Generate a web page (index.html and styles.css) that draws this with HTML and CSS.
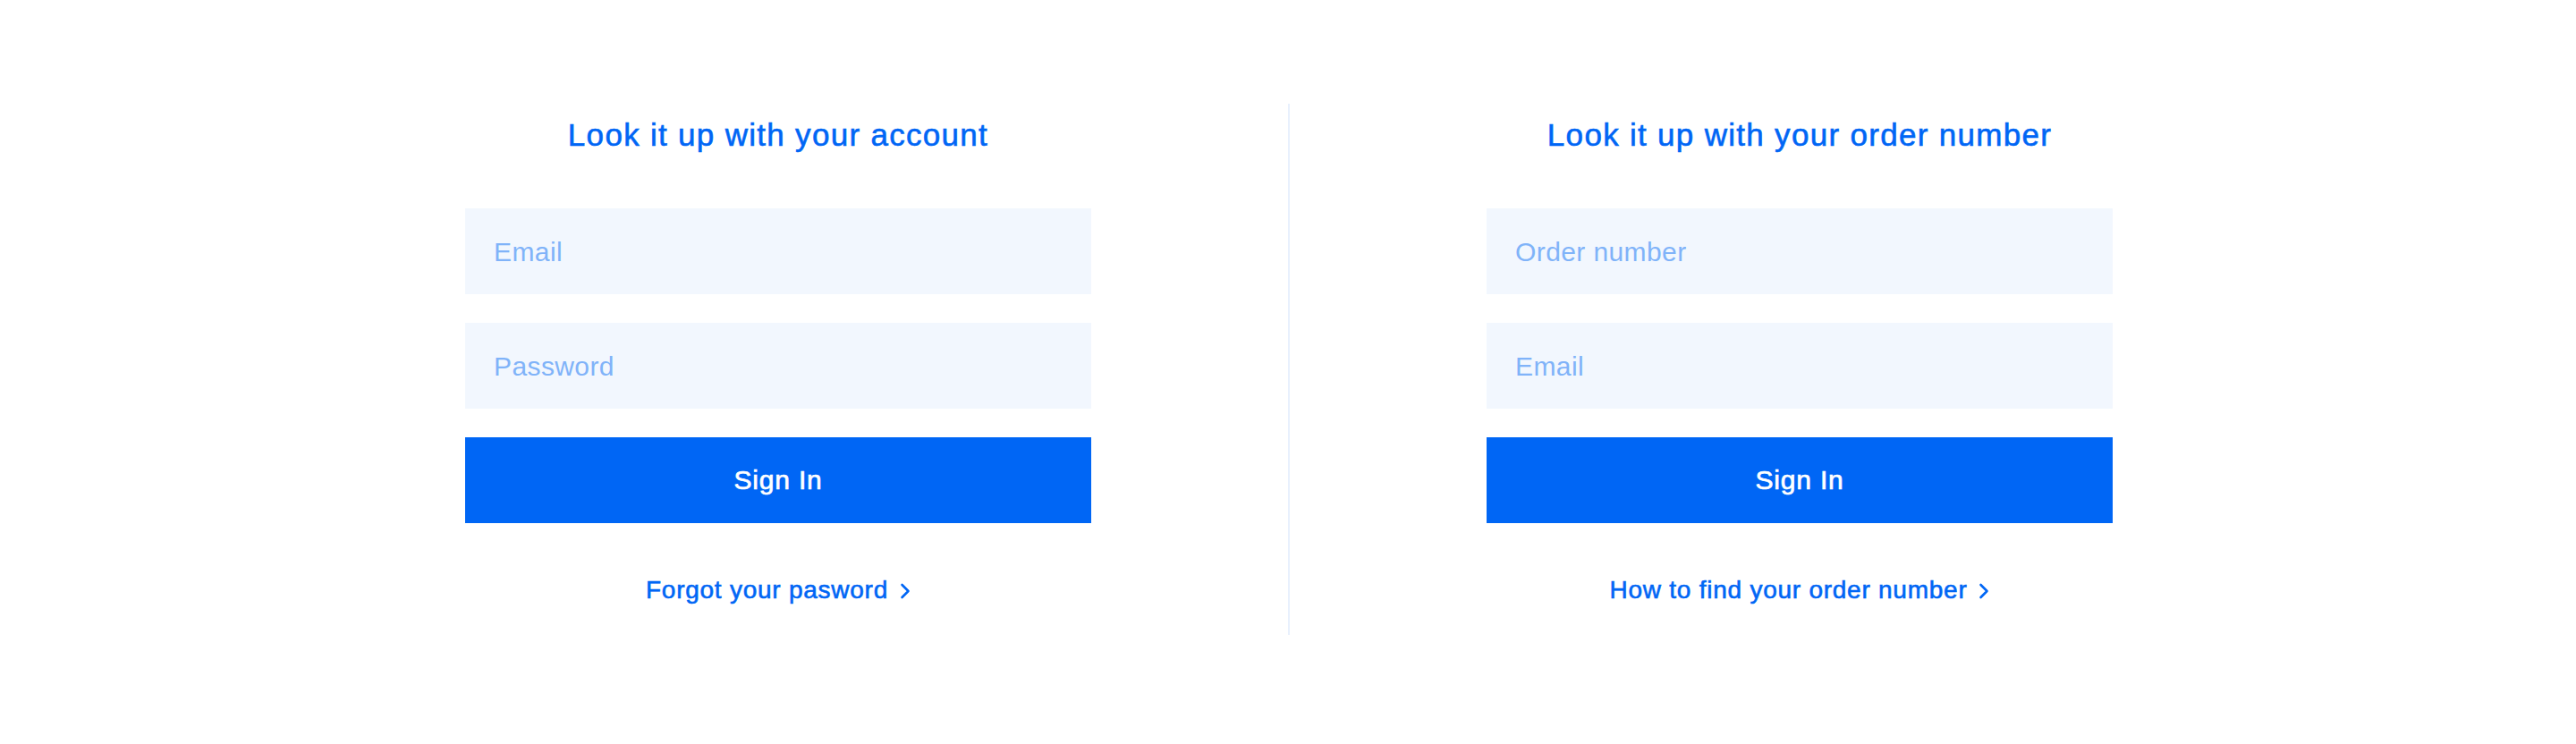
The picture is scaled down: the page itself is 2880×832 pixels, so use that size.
FILE: index.html
```html
<!DOCTYPE html>
<html lang="en">
<head>
<meta charset="utf-8">
<title>Look it up</title>
<link rel="stylesheet" href="styles.css">
</head>
<body>
<main class="lookup">
  <section class="panel">
    <h2 class="panel-title">Look it up with your account</h2>
    <form class="form">
      <input class="field" type="email" placeholder="Email">
      <input class="field" type="password" placeholder="Password">
      <button class="btn" type="button">Sign In</button>
    </form>
    <a class="link" href="#">Forgot your pasword<svg class="chev" viewBox="0 0 12 18" width="12" height="18"><path d="M2.5 2l7 7-7 7" fill="none" stroke="currentColor" stroke-width="2.6" stroke-linecap="round" stroke-linejoin="round"/></svg></a>
  </section>
  <div class="divider"></div>
  <section class="panel">
    <h2 class="panel-title">Look it up with your order number</h2>
    <form class="form">
      <input class="field" type="text" placeholder="Order number">
      <input class="field" type="email" placeholder="Email">
      <button class="btn" type="button">Sign In</button>
    </form>
    <a class="link" href="#">How to find your order number<svg class="chev" viewBox="0 0 12 18" width="12" height="18"><path d="M2.5 2l7 7-7 7" fill="none" stroke="currentColor" stroke-width="2.6" stroke-linecap="round" stroke-linejoin="round"/></svg></a>
  </section>
</main>
</body>
</html>
```
FILE: styles.css
```css
* { box-sizing: border-box; }
html, body { margin: 0; padding: 0; background: #ffffff; }
body {
  font-family: "Liberation Sans", Arial, sans-serif;
  width: 2880px;
  height: 832px;
}
.lookup {
  display: flex;
  justify-content: center;
  align-items: stretch;
  gap: 220px;
  padding: 116px 0 0 2px;
}
.panel {
  width: 700px;
  height: 594px;
  display: flex;
  flex-direction: column;
  align-items: center;
}
.divider {
  width: 2px;
  background: #e8f0fd;
}
.panel-title {
  margin: 0 0 47px;
  font-size: 35px;
  line-height: 70px;
  font-weight: 400;
  letter-spacing: 1.3px;
  color: #0066f5;
  -webkit-text-stroke: 0.6px #0066f5;
}
.form {
  width: 100%;
  display: flex;
  flex-direction: column;
  gap: 32px;
}
.field {
  display: block;
  width: 100%;
  height: 96px;
  border: 0;
  outline: 0;
  background: #f2f7fe;
  padding: 2px 32px 0;
  font-family: "Liberation Sans", Arial, sans-serif;
  font-size: 30px;
  letter-spacing: 0.4px;
  color: #0066f5;
}
.field::placeholder { color: #80b3f9; opacity: 1; }
.btn {
  display: block;
  width: 100%;
  height: 96px;
  border: 0;
  background: #0066f5;
  color: #ffffff;
  font-family: "Liberation Sans", Arial, sans-serif;
  font-size: 30px;
  letter-spacing: 0.8px;
  -webkit-text-stroke: 0.7px #ffffff;
  cursor: pointer;
}
.link {
  margin-top: 55px;
  display: inline-flex;
  align-items: center;
  gap: 13px;
  font-size: 28px;
  line-height: 40px;
  letter-spacing: 0.75px;
  color: #0066f5;
  -webkit-text-stroke: 0.6px #0066f5;
  text-decoration: none;
}
.chev { display: block; margin-top: 2px; }
```
